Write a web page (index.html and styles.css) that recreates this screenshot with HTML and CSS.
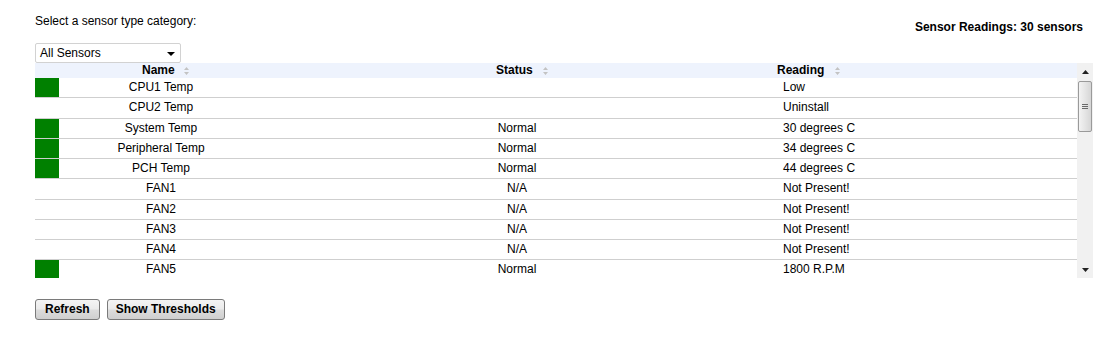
FILE: index.html
```html
<!DOCTYPE html>
<html>
<head>
<meta charset="utf-8">
<link rel="stylesheet" href="styles.css">
</head>
<body>
<div class="page">
  <div class="top">
    <div class="label">Select a sensor type category:</div>
    <div class="count">Sensor Readings: 30 sensors</div>
  </div>
  <div class="select">
    <span>All Sensors</span>
    <svg class="caret" width="8" height="4" viewBox="0 0 8 4"><path d="M0 0H8L4 4Z" fill="#000"/></svg>
  </div>
  <div class="grid-wrap">
    <div class="table">
      <div class="row head">
        <div class="c-color"></div>
        <div class="h-name">Name<svg class="sort" width="5" height="8" viewBox="0 0 5 8"><path d="M0 3L2.5 0L5 3Z M0 5L2.5 8L5 5Z" fill="#c3c3c3"/></svg></div>
        <div class="h-status">Status<svg class="sort" width="5" height="8" viewBox="0 0 5 8"><path d="M0 3L2.5 0L5 3Z M0 5L2.5 8L5 5Z" fill="#c3c3c3"/></svg></div>
        <div class="h-reading">Reading<svg class="sort" width="5" height="8" viewBox="0 0 5 8"><path d="M0 3L2.5 0L5 3Z M0 5L2.5 8L5 5Z" fill="#c3c3c3"/></svg></div>
      </div>
      <div class="row"><div class="c-color ok"></div><div class="c-name">CPU1 Temp</div><div class="c-status"></div><div class="c-reading">Low</div></div>
      <div class="row"><div class="c-color"></div><div class="c-name">CPU2 Temp</div><div class="c-status"></div><div class="c-reading">Uninstall</div></div>
      <div class="row"><div class="c-color ok"></div><div class="c-name">System Temp</div><div class="c-status">Normal</div><div class="c-reading">30 degrees C</div></div>
      <div class="row"><div class="c-color ok"></div><div class="c-name">Peripheral Temp</div><div class="c-status">Normal</div><div class="c-reading">34 degrees C</div></div>
      <div class="row"><div class="c-color ok"></div><div class="c-name">PCH Temp</div><div class="c-status">Normal</div><div class="c-reading">44 degrees C</div></div>
      <div class="row"><div class="c-color"></div><div class="c-name">FAN1</div><div class="c-status">N/A</div><div class="c-reading">Not Present!</div></div>
      <div class="row"><div class="c-color"></div><div class="c-name">FAN2</div><div class="c-status">N/A</div><div class="c-reading">Not Present!</div></div>
      <div class="row"><div class="c-color"></div><div class="c-name">FAN3</div><div class="c-status">N/A</div><div class="c-reading">Not Present!</div></div>
      <div class="row"><div class="c-color"></div><div class="c-name">FAN4</div><div class="c-status">N/A</div><div class="c-reading">Not Present!</div></div>
      <div class="row"><div class="c-color ok"></div><div class="c-name">FAN5</div><div class="c-status">Normal</div><div class="c-reading">1800 R.P.M</div></div>
    </div>
    <div class="scrollbar">
      <div class="sb-btn"><svg width="7" height="4" viewBox="0 0 7 4"><path d="M0 4L3.5 0L7 4Z" fill="#222"/></svg></div>
      <div class="sb-track">
        <div class="sb-thumb"><span></span><span></span><span></span></div>
      </div>
      <div class="sb-btn"><svg width="7" height="4" viewBox="0 0 7 4"><path d="M0 0H7L3.5 4Z" fill="#222"/></svg></div>
    </div>
  </div>
  <div class="buttons">
    <button class="btn">Refresh</button>
    <button class="btn">Show Thresholds</button>
  </div>
</div>
</body>
</html>
```

FILE: styles.css
```css
* { box-sizing: border-box; }
html, body { margin: 0; padding: 0; background: #fff; }
body {
  font-family: "Liberation Sans", Arial, sans-serif;
  font-size: 12px;
  color: #000;
}
.page {
  padding: 14px 27px 0 35px;
  width: 1110px;
}
.top {
  display: flex;
  justify-content: space-between;
  align-items: flex-start;
  line-height: 14px;
}
.count {
  font-weight: bold;
  margin-top: 6px;
}
.select {
  margin-top: 9px;
  width: 146px;
  height: 20px;
  border: 1px solid #d2d2d2;
  border-radius: 2px;
  display: flex;
  align-items: center;
  justify-content: space-between;
  padding: 0 4px 0 4px;
  line-height: 18px;
}
.caret { margin-top: 1px; margin-right: 1px; }
.grid-wrap {
  display: flex;
  width: 1058px;
  height: 215px;
}
.table {
  width: 1042px;
  overflow: hidden;
}
.row {
  display: grid;
  grid-template-columns: 24px 204px 508px 1fr;
  height: 20.25px;
  border-bottom: 1px solid #cfcfcf;
  line-height: 19px;
}
.row.head {
  height: 15px;
  border-bottom: 0;
  background: #eef3fd;
  font-weight: bold;
  line-height: 15px;
}
.sort { margin-left: 9px; vertical-align: -1px; }
.h-name { padding-left: 83px; }
.h-status { padding-left: 233px; }
.h-status .sort { margin-left: 10px; }
.h-reading { padding-left: 6px; }
.h-reading .sort { margin-left: 11px; }
.c-color.ok { background: #008000; }
.c-name, .c-status { text-align: center; }
.c-reading { padding-left: 12px; }
.scrollbar {
  width: 16px;
  height: 215px;
  background: #f1f1f1;
  display: flex;
  flex-direction: column;
}
.sb-btn {
  height: 17px;
  display: flex;
  align-items: center;
  justify-content: center;
}
.sb-track {
  flex: 1;
  padding: 1px 1px 0 1px;
}
.sb-thumb {
  height: 51px;
  border: 1px solid #9a9a9a;
  border-radius: 2px;
  background: linear-gradient(to right, #f3f3f3, #e2e2e2 60%, #d6d6d6);
  display: flex;
  flex-direction: column;
  align-items: center;
  justify-content: center;
  gap: 1px;
}
.sb-thumb span {
  display: block;
  width: 6px;
  height: 1px;
  background: #6a6a6a;
}
.buttons {
  display: flex;
  gap: 7px;
  margin-top: 21px;
}
.btn {
  font-family: "Liberation Sans", Arial, sans-serif;
  font-size: 12px;
  font-weight: bold;
  color: #000;
  height: 21px;
  padding: 0 9px;
  border: 1px solid #7a7a7a;
  border-radius: 3px;
  background: linear-gradient(to bottom, #f4f4f4 0%, #ebebeb 45%, #dbdbdb 55%, #cfcfcf 100%);
  line-height: 19px;
}
.btn + .btn { padding: 0 8px; }
```
